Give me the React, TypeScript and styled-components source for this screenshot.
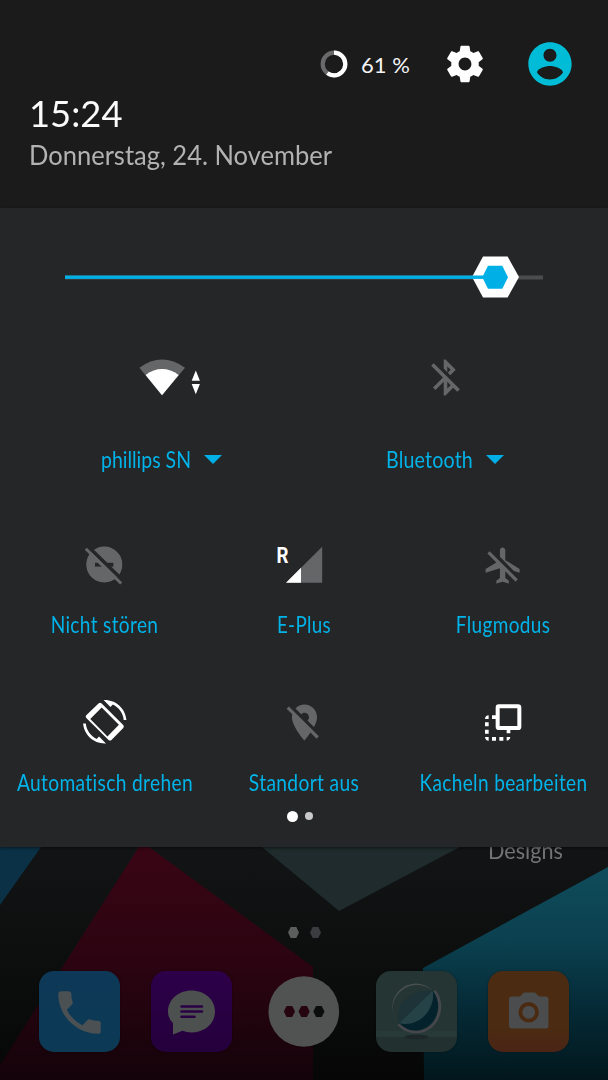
import React from "react";
import styled, { createGlobalStyle } from "styled-components";

const GlobalStyle = createGlobalStyle`
  * { box-sizing: border-box; }
  body { margin: 0; background: #0a0a0a; font-family: Lato, "Liberation Sans", sans-serif; }
  svg { display: block; overflow: visible; flex: none; }
`;

const ACCENT = "#00b3e8";
const OFF = "#656668";

const Screen = styled.main`
  width: 608px;
  height: 1080px;
  display: flex;
  flex-direction: column;
  overflow: hidden;
`;

const Header = styled.header`
  height: 208px;
  flex: none;
  background: #1b1b1b;
  display: flex;
  flex-direction: column;
  align-items: stretch;
  padding: 38px 32px 0 29px;
`;

const StatusRow = styled.div`
  height: 52px;
  display: flex;
  align-items: center;
  justify-content: flex-end;
`;

const BatteryText = styled.span`
  width: 50px;
  margin: 2px 32px 0 13px;
  font-size: 22px;
  line-height: 28px;
  color: #f4f4f4;
  white-space: nowrap;
`;

const SettingsSlot = styled.div`
  margin-right: 37px;
`;

const Clock = styled.div`
  margin-top: 0;
  font-size: 37.5px;
  line-height: 46px;
  color: #fafafa;
  transform: scaleX(0.97);
  transform-origin: left;
`;

const DateLine = styled.div`
  margin-top: 3px;
  font-size: 26.4px;
  line-height: 32px;
  color: #b2b2b2;
  white-space: nowrap;
  transform: scaleX(0.967);
  transform-origin: left;
`;

const Panel = styled.section`
  height: 639px;
  flex: none;
  background: #252628;
  display: flex;
  flex-direction: column;
  position: relative;
  z-index: 1;
  box-shadow: 0 1px 3px rgba(0, 0, 0, 0.5);
`;

const SliderRow = styled.div`
  height: 144px;
  display: flex;
  align-items: flex-start;
  justify-content: center;
  padding-top: 47.5px;
`;

const TileRow = styled.div<{ $pad: number; $height: number }>`
  display: flex;
  height: ${(p) => p.$height}px;
  padding: 0 ${(p) => p.$pad}px;
`;

const Tile = styled.div<{ $icon: number }>`
  flex: 1 1 0;
  min-width: 0;
  display: grid;
  grid-template-rows: ${(p) => p.$icon}px 30px;
  justify-items: center;
`;

const IconBox = styled.div<{ $shift?: number }>`
  display: flex;
  height: 50px;
  align-items: center;
  margin-left: ${(p) => (p.$shift ?? 0) * 2}px;
`;

const LabelLine = styled.div<{ $wide?: boolean }>`
  display: flex;
  align-items: center;
  gap: 13px;
  margin-right: ${(p) => (p.$wide ? 2 : 0)}px;
`;

const Label = styled.span<{ $width: number; $stretch: number; $spacing: number }>`
  display: flex;
  justify-content: center;
  width: ${(p) => p.$width}px;
  padding-top: 1px;
  white-space: nowrap;
  font-size: 22.3px;
  line-height: 30px;
  letter-spacing: ${(p) => p.$spacing}px;
  color: ${ACCENT};
  transform: scaleX(${(p) => p.$stretch});
`;

const Pager = styled.div`
  display: flex;
  justify-content: center;
  align-items: center;
  gap: 7px;
  height: 12px;
  margin-top: 8px;
  padding-right: 8px;
`;

const Dot = styled.i<{ $size: number; $color: string }>`
  width: ${(p) => p.$size}px;
  height: ${(p) => p.$size}px;
  border-radius: 50%;
  background: ${(p) => p.$color};
`;

const Home = styled.section`
  flex: 1;
  position: relative;
  display: flex;
  flex-direction: column;
`;

const Wallpaper = styled.svg`
  position: absolute;
  inset: 0;
`;

const AppName = styled.div`
  position: relative;
  align-self: flex-end;
  width: 75px;
  margin: -12px 45.5px 0 0;
  display: flex;
  justify-content: center;
  font-size: 24px;
  line-height: 30px;
  color: #747474;
  transform: scaleX(0.9);
`;

const HomePager = styled.div`
  position: relative;
  display: flex;
  justify-content: center;
  gap: 11px;
  margin-top: 61.5px;
`;

const Dock = styled.nav`
  position: relative;
  display: flex;
  justify-content: space-between;
  align-items: center;
  margin-top: 33px;
  padding: 0 39px;
`;

const AppIcon = styled.div<{ $bg: string }>`
  width: 81px;
  height: 81.5px;
  border-radius: 15px;
  background: ${(p) => p.$bg};
  box-shadow: 0 0 2px rgba(0, 0, 0, 0.4);
`;

const paths = {
  settings:
    "M19.43 12.98c.04-.32.07-.64.07-.98s-.03-.66-.07-.98l2.11-1.65c.19-.15.24-.42.12-.64l-2-3.46c-.12-.22-.39-.3-.61-.22l-2.49 1c-.52-.4-1.08-.73-1.69-.98l-.38-2.65C14.46 2.18 14.25 2 14 2h-4c-.25 0-.46.18-.49.42l-.38 2.65c-.61.25-1.17.59-1.69.98l-2.49-1c-.23-.09-.49 0-.61.22l-2 3.46c-.13.22-.07.49.12.64l2.11 1.65c-.04.32-.07.65-.07.98s.03.66.07.98l-2.11 1.65c-.19.15-.24.42-.12.64l2 3.46c.12.22.39.3.61.22l2.49-1c.52.4 1.08.73 1.69.98l.38 2.65c.03.24.24.42.49.42h4c.25 0 .46-.18.49-.42l.38-2.65c.61-.25 1.17-.59 1.69-.98l2.49 1c.23.09.49 0 .61-.22l2-3.46c.12-.22.07-.49-.12-.64l-2.11-1.65zM12 15.5c-1.93 0-3.5-1.57-3.5-3.5s1.57-3.5 3.5-3.5 3.5 1.57 3.5 3.5-1.57 3.5-3.5 3.5z",
  account:
    "M12 2C6.48 2 2 6.48 2 12s4.48 10 10 10 10-4.48 10-10S17.52 2 12 2zm0 3c1.66 0 3 1.34 3 3s-1.34 3-3 3-3-1.34-3-3 1.34-3 3-3zm0 14.2c-2.5 0-4.71-1.28-6-3.22.03-1.99 4-3.08 6-3.08 1.99 0 5.97 1.09 6 3.08-1.29 1.94-3.5 3.22-6 3.22z",
  bluetoothOff:
    "M13 5.83l1.88 1.88-1.6 1.6 1.41 1.41 3.02-3.02L12 2h-1v5.03l2 2v-3.2zM5.41 4L4 5.41 10.59 12 5 17.59 6.41 19 11 14.41V22h1l4.29-4.29 2.3 2.29L20 18.59 5.41 4zM13 18.17v-3.76l1.88 1.88L13 18.17z",
  flightOff:
    "M13 9V3.5c0-.83-.67-1.5-1.5-1.5S10 2.67 10 3.5v3.68l7.83 7.83L21 16v-2l-8-5zM3 5.27l4.99 4.99L2 14v2l8-2.5V19l-2 1.5V22l3.5-1 3.5 1v-1.5L13 19v-3.73L18.73 21 20 19.73 4.27 4 3 5.27z",
  locationOff:
    "M12 6.5c1.38 0 2.5 1.12 2.5 2.5 0 .74-.33 1.39-.83 1.85l3.63 3.63c.98-1.86 1.7-3.8 1.7-5.48 0-3.87-3.13-7-7-7-1.98 0-3.76.83-5.04 2.15l3.19 3.19c.46-.52 1.11-.84 1.85-.84zm4.37 9.6l-4.63-4.63-.11-.11L3.27 3 2 4.27l3.18 3.18C5.07 7.95 5 8.47 5 9c0 5.25 7 13 7 13s1.67-1.85 3.38-4.35L18.73 21 20 19.73l-3.63-3.63z",
  phone:
    "M6.62 10.79c1.44 2.83 3.76 5.14 6.59 6.59l2.2-2.2c.27-.27.67-.36 1.02-.24 1.12.37 2.33.57 3.57.57.55 0 1 .45 1 1V20c0 .55-.45 1-1 1-9.39 0-17-7.61-17-17 0-.55.45-1 1-1h3.5c.55 0 1 .45 1 1 0 1.25.2 2.45.57 3.57.11.35.03.74-.25 1.02l-2.2 2.2z",
};

const Glyph = ({ d, size, color }: { d: string; size: number; color: string }) => (
  <svg width={size} height={size} viewBox="0 0 24 24" fill={color}>
    <path d={d} />
  </svg>
);

const BatteryRing = () => (
  <svg width="28" height="28" viewBox="0 0 28 28" fill="none" strokeWidth="4.2">
    <circle cx="14" cy="14" r="11.3" stroke="#69696b" />
    <circle cx="14" cy="14" r="11.3" stroke="#fff" pathLength="100" strokeDasharray="60 40" transform="rotate(-90 14 14)" />
  </svg>
);

const BrightnessSlider = () => (
  <svg width="478" height="42" viewBox="65 255.5 478 42">
    <rect x="65" y="275" width="478" height="4" fill="#4b4c4e" />
    <path d="M472 276.5L483 256h24.600l11.400 20.500L507.600 297H483z" fill="#fff" />
    <rect x="65" y="275" width="424" height="3.400" fill="#00afe6" />
    <path d="M482.300 276.700L488 265.300h14.300l5.700 11.400-5.700 11.500H488z" fill="#00afe6" />
  </svg>
);

const WifiIcon = () => (
  <svg width="46" height="37" viewBox="139 359 46 37">
    <path d="M162 395.3L139.4 367.8Q162 351.4 185 367.8z" fill={OFF} />
    <path d="M162 395.3L145.6 375Q162 363.2 178.7 375z" fill="#fff" />
    <path d="M195.8 370.5l4.1 10.3h-8.2zM195.8 394.3l4.1-10.3h-8.2z" fill="#fff" />
  </svg>
);

const Caret = () => (
  <svg width="18" height="9" viewBox="0 0 18 9">
    <path d="M0 0h18L9 9z" fill="#00afe6" />
  </svg>
);

const DndOffIcon = () => (
  <svg width="38" height="38" viewBox="85 545.5 38 38">
    <mask id="dnd">
      <circle cx="104.3" cy="564" r="18.2" fill="#fff" />
      <path d="M95 564.2h18.4" stroke="#000" strokeWidth="3.8" />
      <path d="M84.5 542.9l40.5 39.6" stroke="#000" strokeWidth="4.2" />
      <path d="M85.4 548.2l36 35" stroke="#fff" strokeWidth="3" />
    </mask>
    <circle cx="104.3" cy="564" r="18.2" fill={OFF} mask="url(#dnd)" />
    <path d="M85.8 548.2l35.4 34.8" stroke={OFF} strokeWidth="3" />
  </svg>
);

const RoamingMark = styled.text`
  font: 700 21.5px Roboto, "Liberation Sans", sans-serif;
  fill: #fff;
`;

const SignalIcon = () => (
  <svg width="36" height="36" viewBox="286 546.5 36 36">
    <path d="M286 582.2l36.2-36v36z" fill={OFF} />
    <path d="M286 582.2l15-15v15z" fill="#fff" />
    <RoamingMark x="276.5" y="562.3" textLength="12" lengthAdjust="spacingAndGlyphs">R</RoamingMark>
  </svg>
);

const RotateIcon = () => (
  <svg width="43.5" height="43.5" viewBox="0 0 24 24" fill="#fff">
    <path d="M16.48 2.52c3.27 1.55 5.61 4.72 5.97 8.48h1.5C23.44 4.84 18.29 0 12 0l-.66.03 3.81 3.81 1.33-1.32z" />
    <path d="M7.52 21.48C4.25 19.94 1.91 16.76 1.55 13H.05C.56 19.16 5.71 24 12 24l.66-.03-3.81-3.81-1.33 1.32z" />
    <path fillRule="evenodd" d="M8.7 1.8Q9.5 1.2 10.3 1.9L22.2 13.8Q22.9 14.6 22.2 15.4L15.7 22Q14.9 22.8 14.1 22L1.8 9.9Q1.1 9.1 1.8 8.4zM10.3 4.2L4 10.5l9.5 9.7 6.3-6.5z" />
  </svg>
);

const TilesIcon = () => (
  <svg width="36.5" height="37" viewBox="257 40 109.5 111">
    <path
      fill="#fff"
      fillRule="evenodd"
      d="M298 41h58q10 0 10 10v57q0 10-10 10h-57q-10 0-10-10V51q0-10 9-10zM301 53v53h53V53z"
    />
    <path
      fill="#fff"
      d="M278 74h12v11h-12zM268 74v11h-11q1-11 11-11zM257 95h11v12h-11zM257 117h11v12h-11zM257 139h11v11q-10 0-11-11zM278 139h12v11h-12zM300 139h12v11h-12zM322 139h11q-1 11-11 11zM322 116h11v12h-11z"
    />
  </svg>
);

const Hex = ({ color }: { color: string }) => (
  <svg width="11" height="11" viewBox="0 0 11 11">
    <path d="M0 5.5L2.7 0h5.6L11 5.5 8.3 11H2.7z" fill={color} />
  </svg>
);

const WallpaperArt = () => (
  <Wallpaper width="608" height="233" viewBox="0 847 608 233">
    <defs>
      <linearGradient id="base" x1="0" y1="0" x2="0" y2="1">
        <stop offset="0" stopColor="#121415" />
        <stop offset="0.45" stopColor="#0d0f0f" />
        <stop offset="1" stopColor="#060606" />
      </linearGradient>
      <linearGradient id="red" x1="0" y1="0" x2="0" y2="1">
        <stop offset="0" stopColor="#3a0515" />
        <stop offset="0.5" stopColor="#2c0411" />
        <stop offset="1" stopColor="#14030a" />
      </linearGradient>
      <linearGradient id="teal" x1="0" y1="0" x2="0" y2="1">
        <stop offset="0" stopColor="#0f4c5b" />
        <stop offset="0.35" stopColor="#0b404f" />
        <stop offset="0.65" stopColor="#052b37" />
        <stop offset="1" stopColor="#02171d" />
      </linearGradient>
    </defs>
    <rect y="847" width="608" height="233" fill="url(#base)" />
    <path d="M0 847h41L0 905z" fill="#0a3145" />
    <path d="M142 842l171 125v113H0v-15z" fill="url(#red)" />
    <path d="M262 847h198l-121 64z" fill="#1f2b2c" />
    <path d="M608 867v213H424l-1-112z" fill="url(#teal)" />
  </Wallpaper>
);

const PhoneApp = () => (
  <AppIcon $bg="linear-gradient(#0d3857, #0c3a55)">
    <svg width="81" height="81" viewBox="0 0 81 81">
      <path d={paths.phone} fill="#4b5052" transform="translate(12.2 13.2) scale(2.36)" />
    </svg>
  </AppIcon>
);

const MessageApp = () => (
  <AppIcon $bg="linear-gradient(#2d0049, #24003c)">
    <svg width="81" height="81" viewBox="0 0 81 81">
      <path d="M40.5 19.5c13 0 23.5 9 23.5 21S53.5 61.5 40.5 61.5q-5 0-9-1.8L22 63.500V52Q17 47.500 17 40.500C17 28.500 27.500 19.500 40.500 19.500z" fill="#4c504f" />
      <path d="M30.500 35.500H51M30.500 40.600H51M30.500 45.700h13" stroke="#2a0045" strokeWidth="2.500" strokeLinecap="round" />
    </svg>
  </AppIcon>
);

const DrawerButton = () => (
  <svg width="81" height="82" viewBox="1.5 0.5 81 82">
    <circle cx="41.300" cy="41" r="35.300" fill="#515252" />
    <path d="M21.300 41l2.800-5.500h5.600l2.800 5.500-2.800 5.500h-5.600zM36 41l2.800-5.500h5.600l2.800 5.500-2.800 5.500h-5.600z" fill="#26040f" />
    <path d="M50.800 41l2.800-5.500h5.600L62 41l-2.800 5.500h-5.600z" fill="#0b0c0c" />
  </svg>
);

const BrowserApp = () => (
  <AppIcon $bg="linear-gradient(#243534 0 74.500%, #273a38 74.500% 82%, #22312f 82%)">
    <svg width="81" height="81" viewBox="0 0 81 81">
      <ellipse cx="40.500" cy="66" rx="12" ry="2.500" fill="#1d272a" />
      <path d="M56.700 19.700A23 23 0 0 0 23 52.300Q14 43 18 30C24 14 44 9 56.700 19.700z" fill="#4a5050" />
      <path d="M56.700 19.700Q62 25 62 36C61 58 36 67 23 52.300z" fill="#03222b" />
      <path d="M57.500 20.500L59.500 19C69 30 66 48 56 56.500C45 66 29 63 21.500 54L23.500 52.500C35 64 50 61 57.500 51C64 42 64 29 57.500 20.500z" fill="#45474c" />
      <path d="M56.700 19.700L23 52.300C18 38 31 18 56.700 19.700z" fill="#1d3337" />
      <path d="M56.700 19.700C60 36 45 57 23 52.300z" fill="#254347" />
    </svg>
  </AppIcon>
);

const CameraApp = () => (
  <AppIcon $bg="linear-gradient(#4b2b12 0 70%, #4a2415)">
    <svg width="81" height="81" viewBox="0 0 81 81">
      <path d="M24 25.500h8l4-4h11l4 4h6.500q3 0 3 3V54.500q0 3-3 3H24q-3 0-3-3V28.500q0-3 3-3z" fill="#4b4c4d" />
      <circle cx="40.700" cy="41.300" r="8.300" fill="none" stroke="#4b2a12" strokeWidth="3.800" />
    </svg>
  </AppIcon>
);

type TileData = {
  label: string;
  width: number;
  stretch: number;
  spacing?: number;
  icon: React.ReactNode;
  shift?: number;
  caret?: boolean;
};

const wideTiles: TileData[] = [
  { label: "phillips SN", width: 90, stretch: 0.873, icon: <WifiIcon />, caret: true },
  { label: "Bluetooth", width: 87, stretch: 0.88, spacing: 0.2, icon: <Glyph d={paths.bluetoothOff} size={43} color={OFF} />, caret: true },
];

const middleTiles: TileData[] = [
  { label: "Nicht stören", width: 107, stretch: 0.856, spacing: 0.4, icon: <DndOffIcon />, shift: -0.7 },
  { label: "E-Plus", width: 54, stretch: 0.843, spacing: 0.4, icon: <SignalIcon /> },
  { label: "Flugmodus", width: 94, stretch: 0.853, spacing: 0.4, icon: <Glyph d={paths.flightOff} size={43} color={OFF} />, shift: -0.3 },
];

const lowerTiles: TileData[] = [
  { label: "Automatisch drehen", width: 176, stretch: 0.86, spacing: 0.4, icon: <RotateIcon />, shift: 0.5 },
  { label: "Standort aus", width: 110, stretch: 0.862, spacing: 0.4, icon: <Glyph d={paths.locationOff} size={43} color={OFF} />, shift: 0.7 },
  { label: "Kacheln bearbeiten", width: 167, stretch: 0.854, spacing: 0.4, icon: <TilesIcon />, shift: 0.3 },
];

const Tiles = ({ items, iconHeight, height, pad }: { items: TileData[]; iconHeight: number; height: number; pad: number }) => (
  <TileRow $pad={pad} $height={height}>
    {items.map((t) => (
      <Tile key={t.label} $icon={iconHeight}>
        <IconBox $shift={t.shift}>{t.icon}</IconBox>
        <LabelLine $wide={t.caret}>
          <Label $width={t.width} $stretch={t.stretch} $spacing={t.spacing ?? 0}>{t.label}</Label>
          {t.caret && <Caret />}
        </LabelLine>
      </Tile>
    ))}
  </TileRow>
);

export default function App() {
  return (
    <Screen>
      <GlobalStyle />
      <Header>
        <StatusRow>
          <BatteryRing />
          <BatteryText>61 %</BatteryText>
          <SettingsSlot>
            <Glyph d={paths.settings} size={44} color="#fff" />
          </SettingsSlot>
          <Glyph d={paths.account} size={52} color="#00bcd6" />
        </StatusRow>
        <Clock>15:24</Clock>
        <DateLine>Donnerstag, 24. November</DateLine>
      </Header>
      <Panel>
        <SliderRow>
          <BrightnessSlider />
        </SliderRow>
        <Tiles items={wideTiles} iconHeight={92} height={188} pad={20.5} />
        <Tiles items={middleTiles} iconHeight={69} height={157} pad={5} />
        <Tiles items={lowerTiles} iconHeight={70} height={105} pad={5} />
        <Pager>
          <Dot $size={11} $color="#fff" />
          <Dot $size={8} $color="#c9c9ca" />
        </Pager>
      </Panel>
      <Home>
        <WallpaperArt />
        <AppName>Designs</AppName>
        <HomePager>
          <Hex color="#5c5d5d" />
          <Hex color="#3b3c3f" />
        </HomePager>
        <Dock>
          <PhoneApp />
          <MessageApp />
          <DrawerButton />
          <BrowserApp />
          <CameraApp />
        </Dock>
      </Home>
    </Screen>
  );
}
